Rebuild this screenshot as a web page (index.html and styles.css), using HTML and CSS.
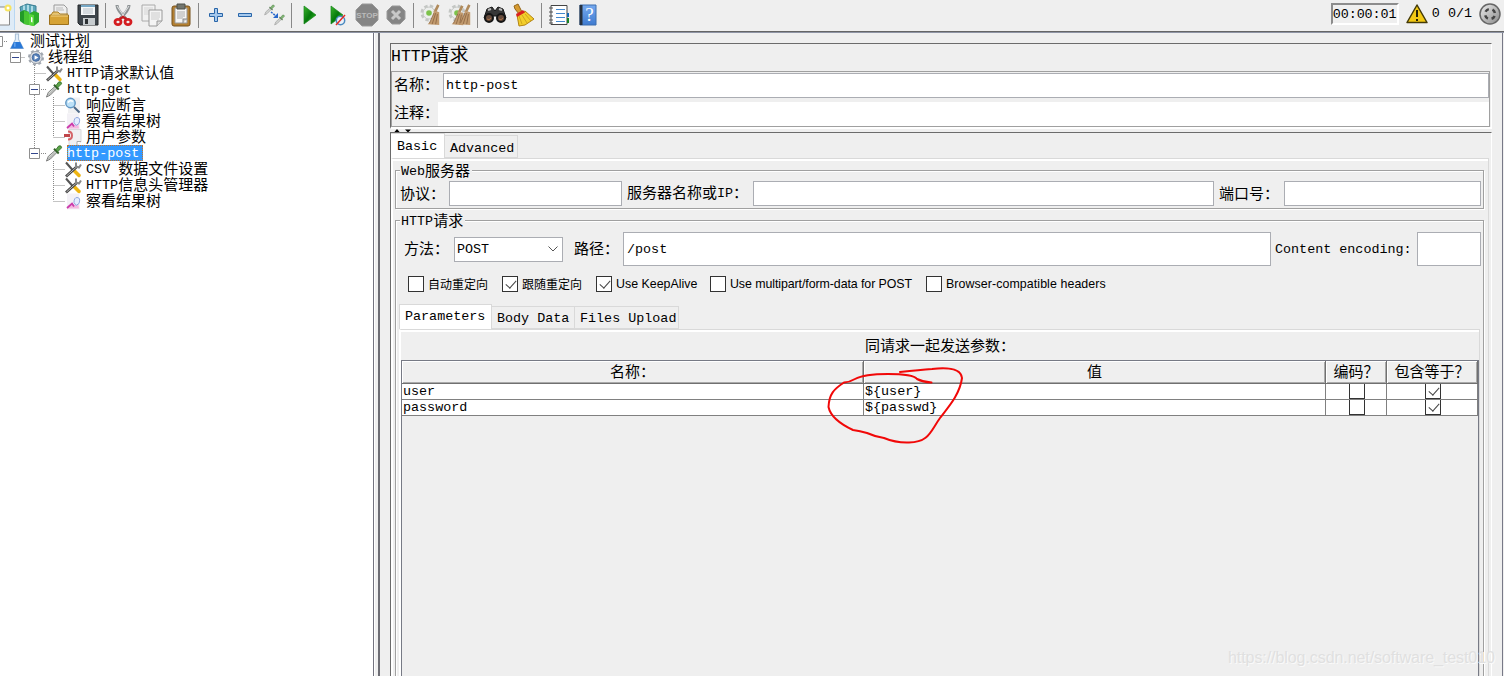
FILE: index.html
```html
<!DOCTYPE html>
<html lang="zh-CN">
<head>
<meta charset="utf-8">
<title>JMeter</title>
<link rel="stylesheet" href="styles.css">
</head>
<body>
<svg width="0" height="0" class="defs">
  <defs>
    <linearGradient id="green" x1="0" y1="0" x2="1" y2="1"><stop offset="0" stop-color="#3cb52c"/><stop offset=".5" stop-color="#067a0c"/><stop offset="1" stop-color="#35c61f"/></linearGradient>
    <linearGradient id="steel" x1="0" y1="0" x2="1" y2="1"><stop offset="0" stop-color="#eee"/><stop offset="1" stop-color="#888"/></linearGradient>
    <linearGradient id="blue" x1="0" y1="0" x2="0" y2="1"><stop offset="0" stop-color="#76aaf0"/><stop offset="1" stop-color="#3f7bd0"/></linearGradient>
    <symbol id="flask" viewBox="0 0 16 16"><path d="M6 1h4M6.500 1v5L2 14.500h12L9.500 6V1" fill="#e3eef8" stroke="#a9bfd6"/><path d="M5 8.500h6l3 6H2z" fill="#2878d8"/><path d="M6 9v4" stroke="#7fb8f4"/></symbol>
    <symbol id="gear" viewBox="0 0 18 18"><circle cx="9" cy="9" r="7" fill="none" stroke="#a3a9b1" stroke-width="3" stroke-dasharray="3 2.500"/><circle cx="9" cy="9" r="6.500" fill="#d8dbe0" stroke="#9ba1aa"/><circle cx="9" cy="9" r="4" fill="#5680ba" stroke="#456b9e"/><path d="M7.500 6.500v5l4-2.500z" fill="#fff"/></symbol>
    <symbol id="tools" viewBox="0 0 18 16"><path d="M2 1l7 8" stroke="#555" stroke-width="2"/><path d="M10 9l5 5" stroke="#eeb512" stroke-width="3.500" stroke-linecap="round"/><path d="M2 15L13 5" stroke="#444" stroke-width="2.800"/><path d="M2.500 14.500L13 5" stroke="#bbb"/><path d="M12 1v4l3 1 2-3" fill="none" stroke="#888" stroke-width="2"/></symbol>
    <symbol id="dropper" viewBox="0 0 18 18"><path d="M1 17l2-5 8-7 2 2-8 8z" fill="#d9ded9" stroke="#777"/><path d="M3 15l7-7" stroke="#999"/><path d="M9 4l5 5" stroke="#315f28" stroke-width="2"/><path d="M11 5l3-4q3-1 3 2l-4 4z" fill="#5ba44a" stroke="#39752e"/></symbol>
    <symbol id="lens" viewBox="0 0 18 16"><path d="M4 0h12v16H4z" fill="#f0f0f2"/><circle cx="6.500" cy="5.500" r="4.700" fill="#bde1f8" stroke="#6399c5" stroke-width="1.500"/><path d="M4 5q2-3 5-1" stroke="#fff" fill="none" stroke-width="1.500"/><path d="M10 9.500l5.500 5.500" stroke="#4d6887" stroke-width="2"/></symbol>
    <symbol id="chart" viewBox="0 0 18 16"><path d="M3 0h12l1 16H3z" fill="#f3f1f6"/><path d="M3 15l5-6 3 3 3-3 1 6z" fill="#f4b8e0"/><path d="M3 14.500l5-4.500 2 3" fill="none" stroke="#ca3bab" stroke-width="1.800"/><path d="M10 9q0-5 3-5 4 0 2 6l-3 2z" fill="#e5edff" stroke="#91a8df"/></symbol>
    <symbol id="param" viewBox="0 0 18 16"><path d="M5 0h12v12l-4 4H5z" fill="#f0f0f2" stroke="#dadadd"/><path d="M13 16v-4h4" fill="#fff" stroke="#aaa"/><path d="M0 6h6" stroke="#c0454a" stroke-width="3"/><path d="M4 2q4 0 4 4t-4 4" fill="none" stroke="#d46468" stroke-width="2"/></symbol>
    <symbol id="broom" viewBox="0 0 18 24" preserveAspectRatio="none"><path d="M15 1L11 9" stroke="#b08a5b" stroke-width="3"/><path d="M10 7l6 2v14l-13-1q6-5 7-15z" fill="#c19a6e"/><path d="M10 10L5 21M12 10L8 22M14 11l-2 11" stroke="#8a6440" stroke-width=".9"/></symbol>
    <symbol id="cog" viewBox="0 0 18 18"><circle cx="9" cy="9" r="6.500" fill="none" stroke="#c3c6c3" stroke-width="4" stroke-dasharray="3 2.100"/><circle cx="9" cy="9" r="6" fill="#eceeec" stroke="#c6c8c6"/><circle cx="9" cy="9" r="2.800" fill="#7cc24a"/></symbol>
  </defs>
</svg>

<header class="toolbar">
  <div class="group">
    <span class="tool new"><svg viewBox="0 0 15 24"><path d="M-2 4H9.500v18H-2" fill="#fafafa" stroke="#888"/><circle cx="8" cy="5" r="3.500" fill="#f7e45e"/><circle cx="8" cy="5" r="1.500" fill="#fff"/></svg></span>
    <span class="tool"><svg viewBox="0 0 24 24"><path d="M2 4l7-3 9 2v12l-8 3-6-3z" fill="#5ca6b9" stroke="#397d92"/><path d="M6 2.500v7M10 2v9M14 3v6" stroke="#c8edf4" stroke-width="1.500"/><path d="M2 9l4-2 5 2v13l-5-1-4-3z" fill="#229a29"/><path d="M6 8l5 1v13l-5-1z" fill="#48c532"/><path d="M11 11l5-3 5 2v9l-5 4-5-1z" fill="#2dac2c"/><path d="M11 11l5 1v11l-5-1z" fill="#57d73b"/><path d="M13 14l1.500.5v5L13 19z" fill="#fff"/></svg></span>
    <span class="tool"><svg viewBox="0 0 24 24"><path d="M7 2h10l3 3v9H7z" fill="#eee" stroke="#999"/><path d="M9 5h7M9 7h8" stroke="#bbb"/><path d="M2.500 12h19v9.500h-19z" fill="#d6a335" stroke="#9d711b"/><path d="M4 12l2-3h5l2 2h8" fill="#e8c56f" stroke="#aa8028"/><path d="M4 13h17" stroke="#f6d483"/></svg></span>
    <span class="tool"><svg viewBox="0 0 24 24"><path d="M2 2h20v20H4l-2-2z" fill="#3e454b" stroke="#24282b"/><path d="M5 2h14v10H5z" fill="#f5f7f8"/><path d="M5 2h14v2H5z" fill="#75a7c5"/><path d="M7 6h10M7 8h10M7 10h10" stroke="#b7c0c7"/><path d="M7 15h12v7H7z" fill="#c7cccf"/><path d="M9 16h3v5H9z" fill="#2c3032"/></svg></span>
  </div><i class="sep"></i>
  <div class="group">
    <span class="tool"><svg viewBox="0 0 24 24"><path d="M6 2q0 3 3 7l6 7M18 2q0 3-3 7l-6 7" fill="none" stroke="#8d9294" stroke-width="3"/><path d="M6 3l8 12M18 3l-8 12" stroke="#e3e5e6"/><ellipse cx="7" cy="19" rx="3" ry="2.600" fill="none" stroke="#d41d21" stroke-width="2.800"/><ellipse cx="17" cy="19" rx="3" ry="2.600" fill="none" stroke="#d41d21" stroke-width="2.800"/><path d="M8.500 16l3.500-2 3.500 2" fill="none" stroke="#c31d20" stroke-width="2.500"/></svg></span>
    <span class="tool"><svg viewBox="0 0 24 24"><path d="M2 2h13v16H2z" fill="#f1f1f1" stroke="#aaa"/><path d="M4 5h9M4 7h9M4 9h9M4 11h9" stroke="#d5d5d5"/><path d="M9 7h13v11l-5 5H9z" fill="#f4f4f4" stroke="#999"/><path d="M11 10h9M11 12h9M11 14h9M11 16h8" stroke="#ccc"/><path d="M17 23v-5h5" fill="#ddd" stroke="#999"/></svg></span>
    <span class="tool"><svg viewBox="0 0 24 24"><rect x="3" y="3" width="18" height="20" rx="2" fill="#b48031" stroke="#75501d"/><path d="M6 5h12v15H6z" fill="#f6f6f5" stroke="#999"/><path d="M8 1h8v5H8z" fill="#72756e" stroke="#4d504b"/><path d="M8 9h8M8 11h8M8 13h8M8 15h6" stroke="#aaa"/><path d="M14 20v-4h4" fill="#ccc" stroke="#888"/></svg></span>
  </div><i class="sep"></i>
  <div class="group">
    <span class="tool"><svg viewBox="0 0 24 24"><path d="M10.500 5.500h3v5h5v3h-5v5h-3v-5h-5v-3h5z" fill="#a6c9ed" stroke="#2865a8"/></svg></span>
    <span class="tool"><svg viewBox="0 0 24 24"><path d="M5.500 10.500h13v3h-13z" fill="#a6c9ed" stroke="#2865a8"/></svg></span>
    <span class="tool"><svg viewBox="0 0 24 24"><g opacity=".75"><use href="#dropper" x="2" y="1" width="11" height="12"/><use href="#dropper" x="12" y="11" width="11" height="12"/></g><path d="M9 9l5 4" stroke="#2767cb" stroke-width="1.500" stroke-dasharray="2 1" fill="none"/><path d="M16 10v5h-5z" fill="#2767cb"/></svg></span>
  </div><i class="sep"></i>
  <div class="group">
    <span class="tool"><svg viewBox="0 0 24 24"><path d="M7 3v18l12-9z" fill="url(#green)" stroke="#16851b" stroke-width=".7"/></svg></span>
    <span class="tool"><svg viewBox="0 0 24 24"><path d="M5 3v18l12-9z" fill="url(#green)" stroke="#16851b" stroke-width=".7"/><circle cx="14.500" cy="17.500" r="4.200" fill="#eaf1f9" stroke="#4c8ac0" stroke-width="1.500"/><path d="M19 12l-9 10" stroke="#e32c24" stroke-width="1.500"/></svg></span>
    <span class="tool"><svg viewBox="0 0 24 24"><path d="M7 1h10l6 6v10l-6 6H7l-6-6V7z" fill="#858585" stroke="#999"/><text x="12" y="15" class="stop">STOP</text></svg></span>
    <span class="tool"><svg viewBox="0 0 24 24"><path d="M8 3h8l5 5v8l-5 5H8l-5-5V8z" fill="#858585" stroke="#999"/><path d="M8 8l8 8m0-8l-8 8" stroke="#c8c8c8" stroke-width="3"/></svg></span>
  </div><i class="sep"></i>
  <div class="group">
    <span class="tool"><svg viewBox="0 0 24 24"><use href="#cog" x="1" y="1" width="18" height="18"/><use href="#broom" x="6" y="1" width="16" height="22"/></svg></span>
    <span class="tool"><svg viewBox="0 0 24 24"><use href="#cog" x="0" y="1" width="18" height="18"/><use href="#broom" x="1" y="2" width="16" height="21"/><use href="#broom" x="8" y="1" width="16" height="22"/></svg></span>
  </div><i class="sep"></i>
  <div class="group">
    <span class="tool"><svg viewBox="0 0 24 24"><path d="M4 6l5-2 3 4 3-4 5 2 3 9-6 3-3-5h-4l-3 5-6-3z" fill="#373737" stroke="#171717"/><circle cx="6" cy="15" r="4" fill="#654b3c" stroke="#151515" stroke-width="2"/><circle cx="18" cy="15" r="4" fill="#654b3c" stroke="#151515" stroke-width="2"/><path d="M5 7l3-1M16 6l3 1" stroke="#bbb" stroke-width="2"/><path d="M4 16q2 2 4-1m8 1q2 2 4-1" stroke="#ac7046" fill="none"/></svg></span>
    <span class="tool"><svg viewBox="0 0 24 24"><path d="M2 3l4-2 4 8-3 2-4-5z" fill="#d69b31" stroke="#94661a"/><path d="M5 12l8-4 9 8-9 6-6 1z" fill="#f2ce2b" stroke="#b38413"/><path d="M7 13l3 8M10 12l5 8M13 11l6 7" stroke="#d0a51d"/><path d="M4 11l7-4 2 2.500-8 4.500z" fill="#d9201f"/></svg></span>
  </div><i class="sep"></i>
  <div class="group">
    <span class="tool"><svg viewBox="0 0 24 24"><path d="M4 2.500h16v19H4z" fill="#fff" stroke="#444"/><path d="M2 5h4M2 9h4M2 13h4M2 17h4M2 20h4" stroke="#555"/><path d="M9 6.500h9M9 10.500h9M9 14.500h9M9 18.500h9" stroke="#4388ce"/><path d="M21 10v4" stroke="#1768b3" stroke-width="2"/><path d="M21 15v5" stroke="#168524" stroke-width="2"/></svg></span>
    <span class="tool"><svg viewBox="0 0 24 24"><path d="M4 2h16v20H4z" fill="url(#blue)" stroke="#3c6fb0"/><path d="M3.500 2h3v20h-3z" fill="#26303e"/><text x="13.500" y="18" class="help">?</text></svg></span>
  </div>
  <div class="status">
    <span class="clock m">00:00:01</span>
    <svg class="warn" viewBox="0 0 22 20"><path d="M11 1L21 18.500H1z" fill="#f3c915" stroke="#443a08" stroke-width="1.500" stroke-linejoin="round"/><path d="M11 6v7m0 2v2" stroke="#292407" stroke-width="2"/></svg>
    <span class="m">0</span><span class="m ratio">0/1</span>
    <svg class="round" viewBox="0 0 22 22"><circle cx="11" cy="11" r="10" fill="url(#steel)" stroke="#666" stroke-width="1.500"/><circle cx="11" cy="11" r="5" fill="none" stroke="#444" stroke-width="2.500" stroke-dasharray="4 3.850" stroke-dashoffset="-2"/></svg>
  </div>
</header>

<main class="work">
  <nav class="tree">
    <svg class="wires" viewBox="0 0 90 180"><path d="M0 8.500h8M15.500 24.500h10M34.500 32v90M34.500 40.500h11M39 56.500h7M39 120.500h7M53.500 64v40M53.500 72.500h11M53.500 88.500h11M53.500 104.500h11M53.500 128v40M53.500 136.500h11M53.500 152.500h11M53.500 168.500h11" class="dots"/><path d="M-5.500 3.500h8v10h-8zM10.500 19.500h10v10h-10zM29.500 51.500h10v10h-10zM29.500 115.500h10v10h-10z" fill="#fff" stroke="#8f8f8f"/><path d="M12 24.500h7M31 56.500h7M31 120.500h7" stroke="#34478d"/></svg>
    <div class="node l0"><svg><use href="#flask"/></svg><span class="cjk">测试计划</span></div>
    <div class="node l1"><svg><use href="#gear"/></svg><span class="cjk">线程组</span></div>
    <div class="node l2"><svg><use href="#tools"/></svg><span><b class="m">HTTP</b>请求默认值</span></div>
    <div class="node l2"><svg><use href="#dropper"/></svg><span class="m low">http-get</span></div>
    <div class="node l3"><svg><use href="#lens"/></svg><span class="cjk">响应断言</span></div>
    <div class="node l3"><svg><use href="#chart"/></svg><span class="cjk">察看结果树</span></div>
    <div class="node l3"><svg><use href="#param"/></svg><span class="cjk">用户参数</span></div>
    <div class="node l2"><svg><use href="#dropper"/></svg><span class="m selected">http-post</span></div>
    <div class="node l3"><svg><use href="#tools"/></svg><span><b class="m">CSV </b>数据文件设置</span></div>
    <div class="node l3"><svg><use href="#tools"/></svg><span><b class="m">HTTP</b>信息头管理器</span></div>
    <div class="node l3"><svg><use href="#chart"/></svg><span class="cjk">察看结果树</span></div>
  </nav>
  <div class="gutter"></div>
  <section class="editor">
    <div class="head">
      <h1><b class="m">HTTP</b>请求</h1>
      <div class="meta">
        <div class="metarow name"><label>名称：</label><div class="input m">http-post</div></div>
        <div class="metarow note"><label>注释：</label><div class="input"></div></div>
      </div>
    </div>
    <div class="splitter"><svg viewBox="0 0 20 4"><path d="M0 3.500L3 0l3 3.500zM11 .5h6l-3 3z"/></svg></div>
    <div class="body">
      <div class="tabs outer"><span class="tab active m">Basic</span><span class="tab m">Advanced</span></div>
      <div class="page">
        <div class="box web">
          <div class="legend"><span><b class="m">Web</b>服务器</span></div>
          <div class="row">
            <label class="w1">协议：</label><div class="input i1"></div>
            <label class="w2">服务器名称或<b class="m">IP</b>：</label><div class="input i2"></div>
            <label class="w3">端口号：</label><div class="input i3"></div>
          </div>
        </div>
        <div class="box req">
          <div class="legend"><span><b class="m">HTTP</b>请求</span></div>
          <div class="row reqrow">
            <label class="w4">方法：</label><div class="input select m">POST<svg viewBox="0 0 10 6"><path d="M.5.500L5 5 9.500.500" fill="none" stroke="#555"/></svg></div>
            <label class="w5">路径：</label><div class="input tall m path">/post</div>
            <label class="w6 m">Content encoding:</label><div class="input tall enc"></div>
          </div>
          <div class="checks">
            <label class="c1 cn"><i class="cb"></i>自动重定向</label>
            <label class="c2 cn"><i class="cb on"></i>跟随重定向</label>
            <label class="c3"><i class="cb on"></i>Use KeepAlive</label>
            <label class="c4"><i class="cb"></i>Use multipart/form-data for POST</label>
            <label class="c5"><i class="cb"></i>Browser-compatible headers</label>
          </div>
          <div class="tabs inner"><span class="tab active m">Parameters</span><span class="tab m">Body Data</span><span class="tab m">Files Upload</span></div>
          <div class="params">
            <div class="caption">同请求一起发送参数：</div>
            <div class="table">
              <div class="tr th"><span>名称：</span><span>值</span><span>编码？</span><span>包含等于？</span></div>
              <div class="tr m"><span>user</span><span>${user}</span><span><i class="cb"></i></span><span><i class="cb on"></i></span></div>
              <div class="tr m"><span>password</span><span>${passwd}</span><span><i class="cb"></i></span><span><i class="cb on"></i></span></div>
            </div>
          </div>
        </div>
      </div>
    </div>
  </section>
</main>
<svg class="scribble" viewBox="820 360 150 90"><path d="M931.500 382.500Q923 382 917 379Q913 374 888 374Q864 374 855 379Q850 382 844 382.500C834 389 829 394 828.500 407C830 414 836 422 853 430Q860 431 867 433Q876 437 884 438Q896 443 909 442.500C929 442 930 432 940 418C951 404 960 393 962 378C961 369 950 367 932 369Q920 370 900 372"/></svg>
<div class="watermark">https://blog.csdn.net/software_test010</div>
</body>
</html>
```
FILE: styles.css
```css
* { box-sizing: border-box; }
html { overflow: hidden; }
body {
  margin: 0;
  width: 1504px;
  height: 676px;
  overflow: hidden;
  position: relative;
  background: #efefef;
  color: #000;
  font: 400 15px/16px "Noto Sans CJK SC", sans-serif;
  white-space: nowrap;
}
.defs { position: absolute; }
.m { font-family: "Liberation Mono", monospace; font-size: 13.4px; font-weight: 400; white-space: pre; }
b.m { position: relative; top: -1px; line-height: 1; }
svg { display: block; flex: none; }

/* toolbar */
.toolbar {
  display: flex;
  height: 33px;
  border-bottom: 1px solid #8f95a5;
  box-shadow: inset 0 -1px #666;
}
.group { display: flex; }
.tool { width: 29px; height: 30px; display: flex; align-items: center; justify-content: center; }
.tool svg { width: 24px; height: 24px; }
.tool.new { width: 15px; background: #deebf7; border-right: 1px solid #b9d7f2; }
.tool.new svg { width: 15px; }
.sep { width: 6px; height: 25px; margin-top: 3px; border-left: 1px solid #888; margin-left: 3px; margin-right: -3px; }
.stop { font: bold 8px "Liberation Sans", sans-serif; fill: #bbb; text-anchor: middle; }
.help { font: 19px "Liberation Serif", serif; fill: #fff; text-anchor: middle; }
.status { margin-left: auto; display: flex; align-items: center; height: 28px; padding-right: 3px; }
.clock { width: 68px; height: 22px; line-height: 19px; letter-spacing: -.1px; border: 2px solid #8c8c8c; border-right-color: #fff; border-bottom-color: #fff; margin-right: 7px; }
.warn { width: 22px; height: 20px; margin-right: 4px; }
.ratio { margin: 0 7px 0 8px; }
.round { width: 22px; height: 22px; }

.work { display: flex; height: 643px; }

/* tree */
.tree { position: relative; width: 375px; background: #fff; border-right: 1px solid #fff; box-shadow: inset -1px 0 #73737f; }
.wires { position: absolute; left: 0; top: 0; width: 90px; height: 180px; }
.dots { fill: none; stroke: #888; stroke-dasharray: 1 1; }
.node { position: relative; height: 16px; display: flex; align-items: center; }
.node svg { width: 18px; height: 17px; margin-right: 3px; }
.l0 { padding-left: 8px; }
.l1 { padding-left: 27px; }
.l2 { padding-left: 45px; }
.l3 { padding-left: 64px; }
.l0 svg, .l2 svg, .l3 svg { margin-right: 4px; }
.cjk { position: relative; top: -1px; }
.low { position: relative; top: 1px; }
.selected { background: #3399ff; color: #fff; outline: 1px dotted #c67428; outline-offset: -1px; width: 76px; height: 16px; line-height: 18px; }
.gutter { width: 5px; border-right: 2px solid #6d6d74; }

/* editor */
.editor { width: 1123px; padding: 10px 10px 0; border-right: 1px solid #777987; display: flex; flex-direction: column; }
.head { width: 1102px; height: 86px; border: 1px solid #6b6b6b; border-right-color: #fff; border-bottom: 2px solid #fff; }
h1 { margin: 0; height: 27px; font: 400 19px/20px "Noto Sans CJK SC", sans-serif; }
h1 .m { font-size: 16.5px; }
.meta { width: 1099px; height: 56px; border: 1px solid #a0a0a0; padding-top: 1px; }
.metarow { display: flex; align-items: center; }
label { position: relative; top: -1px; }
.metarow label { padding-left: 2px; top: -2px; }
.name label { width: 51px; }
.note { margin-top: 4px; }
.note label { width: 46px; }
.metarow .input { flex: 1; }
.input { height: 25px; line-height: 23px; background: #fff; border: 1px solid #abadb3; padding-left: 2px; }
.note .input { border: 0; height: 24px; }
.splitter { height: 3px; padding-left: 4px; }
.splitter svg { width: 20px; height: 4px; }
.body { flex: 1; min-height: 0; width: 1102px; border: 1px solid #6b6b6b; border-right-color: #fff; border-bottom: 0; }
.tabs { display: flex; align-items: flex-end; height: 25px; position: relative; }
.tab { height: 23px; width: 73px; line-height: 24px; padding-left: 5px; border: 1px solid #d9d9d9; border-left-width: 0; }
.tab.active { width: 54px; height: 25px; padding-left: 6px; line-height: 24px; background: #fff; border-bottom: 0; }
.outer .tab { line-height: 25px; }
.page { width: 1098px; height: 518px; border-top: 1px solid #d9d9d9; border-left: 2px solid #fff; border-right: 1px solid #d9d9d9; box-shadow: inset 0 2px #fff; padding: 3px 4px 0 2px; }
.box { position: relative; width: 1089px; border: 1px solid #a0a0a0; box-shadow: 1px 1px #fff, inset 1px 1px #fff; }
.web { height: 39px; margin-top: 8px; }
.req { height: 456px; margin-top: 11px; border-bottom: 0; }
.legend { height: 9px; padding-left: 4px; }
.legend span { display: inline-block; background: #efefef; padding: 0 2px 0 1px; position: relative; top: -9px; line-height: 16px; height: 16px; vertical-align: top; }
.row { display: flex; align-items: center; }
.web .row { padding-left: 4px; padding-top: 1px; }
.w1 { width: 49px; } .i1 { width: 173px; margin-right: 5px; }
.w2 { width: 126px; } .i2 { width: 461px; margin-right: 5px; }
.w3 { width: 65px; } .i3 { width: 197px; }
.reqrow { padding: 2px 0 0 8px; }
.w4 { width: 50px; }
.select { width: 109px; display: flex; justify-content: space-between; align-items: center; padding-right: 4px; margin-right: 11px; }
.select svg { width: 10px; height: 6px; }
.w5 { width: 49px; }
.tall { height: 34px; line-height: 33px; }
.path { width: 648px; margin-right: 4px; padding-left: 3px; }
.w6 { width: 142px; top: 1px; } .enc { width: 64px; }
.checks { display: flex; height: 16px; margin: 10px 0 0 12px; font: 12.4px/16px "Liberation Sans", sans-serif; }
.checks label { display: flex; align-items: center; top: 0; height: 16px; }
.checks .cn { font: 400 12px/16px "Noto Sans CJK SC", sans-serif; }
.cb { position: relative; display: block; width: 16px; height: 16px; border: 1px solid #333; background: #fff; flex: none; }
.cb.on::after { content: ""; position: absolute; left: 5px; top: 1px; width: 5px; height: 9px; border: solid #444; border-width: 0 1.5px 1.5px 0; transform: rotate(42deg); }
.checks .cb { margin-right: 4px; }
.c1, .c2 { width: 94px; } .c3 { width: 114px; } .c4 { width: 216px; }
.c4 { letter-spacing: -.08px; } .c5 { letter-spacing: .08px; }
.inner { margin: 12px 0 0 3px; }
.inner .tab { width: 104px; }
.inner .tab:nth-child(2) { width: 83px; }
.inner .tab.active { width: 93px; border-left: 1px solid #d9d9d9; padding-left: 5px; }
.params { width: 1081px; height: 348px; margin-left: 3px; border-top: 1px solid #d9d9d9; border-left: 2px solid #fff; border-right: 1px solid #d9d9d9; box-shadow: inset 0 2px #fff; }
.caption { height: 30px; line-height: 30px; text-align: center; }
.table { width: 1078px; height: 316px; border: 1px solid #777a85; border-bottom: 0; }
.tr { display: grid; grid-template-columns: 462px 462px 61px 91px; height: 16px; width: 1076px; }
.tr > span { background: #fff; border-right: 1px solid #808080; border-bottom: 1px solid #808080; padding-left: 1px; line-height: 16px; display: flex; justify-content: flex-start; overflow: hidden; }
.th { height: 23px; }
.th > span { background: #efefef; justify-content: center; line-height: 20px; border-color: #707070; box-shadow: inset 1px 1px #fff, inset -1px -1px #aaa; padding: 0; }
.tr > span:nth-child(n+3) { justify-content: center; }
.tr .cb { margin-top: -1px; }

.scribble { position: absolute; left: 820px; top: 360px; width: 150px; height: 90px; fill: none; stroke: #f10808; stroke-width: 2; stroke-linecap: round; }
.watermark { position: absolute; left: 1228px; top: 648px; font: 16px/20px "Liberation Sans", sans-serif; letter-spacing: -.07px; color: #e0e0e0; text-shadow: 1px 1px #fafafa; }
```
